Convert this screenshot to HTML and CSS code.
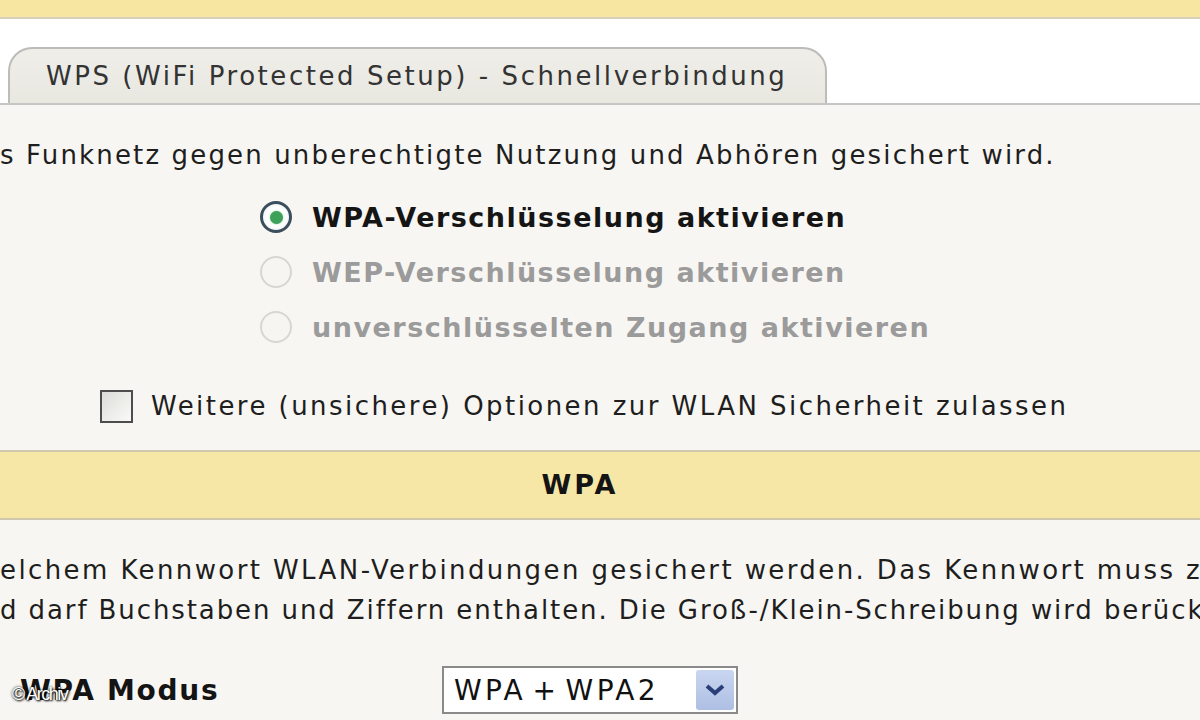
FILE: index.html
```html
<!DOCTYPE html>
<html lang="de">
<head>
<meta charset="utf-8">
<title>WLAN Sicherheit</title>
<link rel="stylesheet" href="styles.css">
</head>
<body>
<div class="page">
  <div class="topband"></div>
  <div class="tabbar">
    <div class="tab">WPS (WiFi Protected Setup) - Schnellverbindung</div>
  </div>
  <div class="content">
    <p class="intro">s Funknetz gegen unberechtigte Nutzung und Abhören gesichert wird.</p>
    <div class="radios">
      <div class="radio-row">
        <span class="radio checked"><span class="dot"></span></span>
        <span class="radio-label">WPA-Verschlüsselung aktivieren</span>
      </div>
      <div class="radio-row disabled">
        <span class="radio"></span>
        <span class="radio-label">WEP-Verschlüsselung aktivieren</span>
      </div>
      <div class="radio-row disabled">
        <span class="radio"></span>
        <span class="radio-label">unverschlüsselten Zugang aktivieren</span>
      </div>
    </div>
    <div class="check-row">
      <span class="checkbox"></span>
      <span class="check-label">Weitere (unsichere) Optionen zur WLAN Sicherheit zulassen</span>
    </div>
  </div>
  <div class="section-head">WPA</div>
  <div class="content2">
    <p class="para">elchem Kennwort WLAN-Verbindungen gesichert werden. Das Kennwort muss zwischen</p>
    <p class="para para-tight">d darf Buchstaben und Ziffern enthalten. Die Groß-/Klein-Schreibung wird berücksichtigt.</p>
    <div class="field-row">
      <span class="field-label">WPA Modus</span>
      <span class="select">
        <span class="select-text">WPA + WPA2</span>
        <span class="select-btn">
          <svg width="22" height="14" viewBox="0 0 22 14"><path d="M3 3 L11 10 L19 3" fill="none" stroke="#2a3f78" stroke-width="4"/></svg>
        </span>
      </span>
    </div>
  </div>
  <div class="watermark">© Archiv</div>
</div>
</body>
</html>
```

FILE: styles.css
```css
html, body {
  margin: 0;
  padding: 0;
}
body {
  width: 1200px;
  height: 720px;
  overflow: hidden;
  background: #f8f6f2;
  font-family: "DejaVu Sans", Verdana, sans-serif;
  color: #1a1a1a;
}
.page {
  position: relative;
  width: 1200px;
  height: 720px;
  overflow: hidden;
}
.topband {
  height: 17px;
  background: #f6e6a2;
  border-bottom: 2px solid #d8d2bc;
}
.tabbar {
  height: 56px;
  padding-top: 28px;
  padding-left: 8px;
  background: #ffffff;
  border-bottom: 2px solid #c6c6c6;
  display: flex;
  align-items: flex-end;
}
.tab {
  width: 779px;
  height: 54px;
  padding-left: 36px;
  background: linear-gradient(#efeee9, #e8e7e0);
  border: 2px solid #bcbcb8;
  border-bottom: none;
  border-radius: 24px 24px 0 0;
  font-size: 26px;
  letter-spacing: 2.55px;
  line-height: 54px;
  color: #333333;
  white-space: nowrap;
}
.content {
  padding-top: 1px;
}
.intro {
  margin: 32px 0 0 0;
  font-size: 26px;
  letter-spacing: 2.15px;
  line-height: 34px;
  white-space: nowrap;
  color: #1e1e1e;
}
.radios {
  margin-top: 28px;
  padding-left: 260px;
  display: flex;
  flex-direction: column;
  gap: 21px;
}
.radio-row {
  display: flex;
  align-items: center;
  height: 34px;
  gap: 20px;
}
.radio {
  width: 32px;
  height: 32px;
  box-sizing: border-box;
  border-radius: 50%;
  border: 2px solid #d6d6d2;
  background: #f6f5f1;
  display: flex;
  align-items: center;
  justify-content: center;
}
.radio.checked {
  border: 3px solid #3b4e5e;
  background: radial-gradient(circle, #ffffff 50%, #dfe7ea 100%);
}
.dot {
  width: 13px;
  height: 13px;
  border-radius: 50%;
  background: #3fa05a;
  box-shadow: 0 0 2px #7fd08f;
}
.radio-label {
  font-size: 27px;
  font-weight: bold;
  letter-spacing: 1.5px;
  white-space: nowrap;
  color: #151515;
}
.radio-row.disabled .radio-label {
  color: #9b9b9b;
}
.check-row {
  margin-top: 45px;
  padding-left: 100px;
  display: flex;
  align-items: center;
  gap: 18px;
  height: 34px;
}
.checkbox {
  width: 33px;
  height: 33px;
  box-sizing: border-box;
  border: 2px solid #4d4d4d;
  background: linear-gradient(135deg, #dcdcd8, #fafaf8);
}
.check-label {
  font-size: 26px;
  letter-spacing: 2.45px;
  white-space: nowrap;
  color: #1e1e1e;
}
.section-head {
  margin-top: 27px;
  height: 66px;
  background: #f6e7a6;
  border-top: 2px solid #cfc7ae;
  border-bottom: 2px solid #cfc7ae;
  text-align: center;
  font-size: 27px;
  font-weight: bold;
  letter-spacing: 3px;
  line-height: 66px;
  padding-right: 40px;
  color: #141414;
}
.content2 {
  padding-top: 30px;
}
.para {
  margin: 0;
  font-size: 26px;
  letter-spacing: 2.4px;
  line-height: 40px;
  white-space: nowrap;
  color: #1e1e1e;
}
.para-tight {
  letter-spacing: 1.9px;
}
.field-row {
  margin-top: 35px;
  display: flex;
  align-items: center;
  padding-left: 20px;
  height: 50px;
}
.field-label {
  width: 422px;
  font-size: 28px;
  font-weight: bold;
  letter-spacing: 1.7px;
  white-space: nowrap;
  color: #141414;
}
.select {
  width: 296px;
  height: 48px;
  box-sizing: border-box;
  border: 2px solid #8a8a8a;
  background: #ffffff;
  display: flex;
  align-items: center;
  justify-content: space-between;
  padding: 0 2px 0 10px;
}
.select-text {
  font-size: 28px;
  letter-spacing: 3.4px;
  word-spacing: -6px;
  white-space: nowrap;
  color: #111111;
}
.select-btn {
  width: 38px;
  height: 40px;
  border-radius: 3px;
  background: linear-gradient(#c9d6f0, #aebfe4);
  display: flex;
  align-items: center;
  justify-content: center;
}
.watermark {
  position: absolute;
  left: 12px;
  top: 684px;
  font-family: "Liberation Sans", Arial, sans-serif;
  font-size: 18px;
  color: #ffffff;
  text-shadow: 0 0 3px #000, 1px 1px 2px #000;
  letter-spacing: -1.5px;
}
```
